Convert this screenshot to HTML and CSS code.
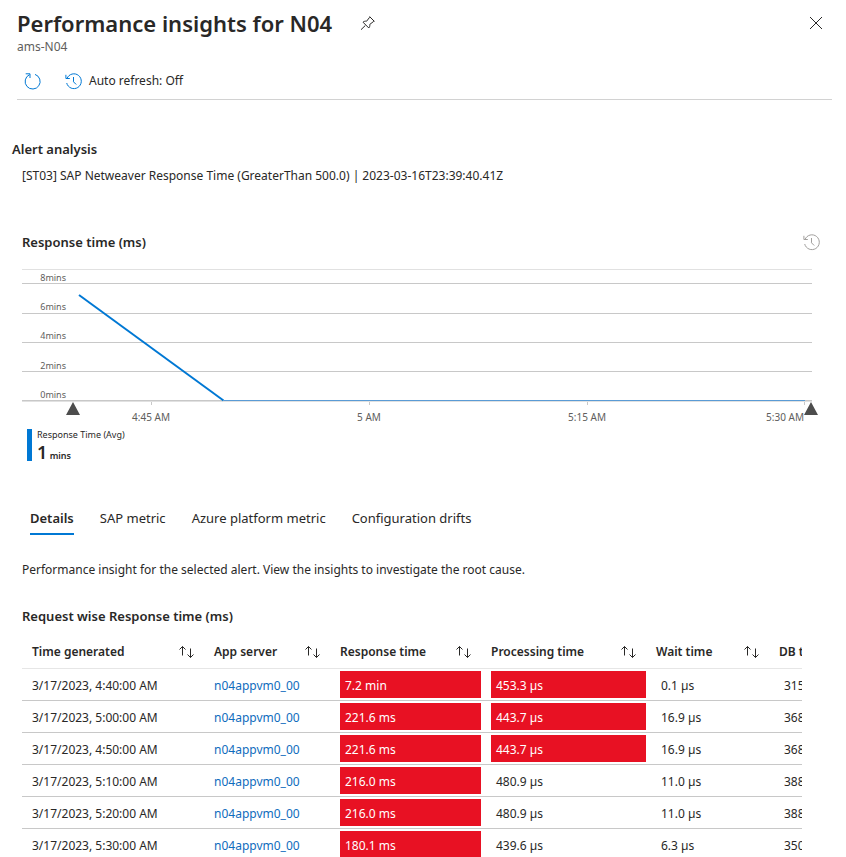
FILE: index.html
```
<!DOCTYPE html>
<html lang="en">
<head>
<meta charset="utf-8">
<meta name="viewport" content="width=device-width, initial-scale=1">
<title>Performance insights for N04</title>
<link rel="stylesheet" href="styles.css">
</head>
<body>
<svg class="sprite" aria-hidden="true">
  <symbol id="history" viewBox="0 0 17 17">
    <path d="M2 5.500A7.400 7.400 0 1 1 1.700 10M.9 1.800V5.500H4.800M8.500 4V8.800L11.200 11.500" fill="none" stroke="currentColor"/>
  </symbol>
  <symbol id="sort" viewBox="0 0 17 14">
    <path d="M4.500 10.500V1.500M1.500 4.500L4.500 1.500L7.500 4.500M12.500 3.500V12.500M9.500 9.500L12.500 12.500L15.500 9.500" fill="none" stroke="currentColor"/>
  </symbol>
</svg>
<div class="blade">
  <header class="header">
    <div class="title-row">
      <h1>Performance insights for N04</h1>
      <button class="icon-button pin" type="button" aria-label="Pin to dashboard">
        <svg width="16" height="16" viewBox="0 0 16 16" fill="none" stroke="currentColor" stroke-linejoin="round"><path d="M1 14.700L5.300 10.500M9.700 1.700L14.300 6.300L13.400 6.600L9.800 9.400C10 11 9.600 12 8.800 13L3 7.200C4 6.300 5.200 6 6.600 6.200L9.400 2.600Z"/></svg>
      </button>
      <button class="icon-button close" type="button" aria-label="Close">
        <svg width="14" height="14" viewBox="0 0 14 14" stroke="currentColor"><path d="M1 1L13 13M13 1L1 13"/></svg>
      </button>
    </div>
    <p class="subtitle">ams-N04</p>
    <div class="toolbar">
      <button class="tool" type="button" aria-label="Refresh">
        <svg width="17" height="17" viewBox="0 0 17 17" fill="none" stroke="currentColor"><path d="M11 1.400A7.500 7.500 0 1 1 5.500 1.700M1.700 .8H6V5"/></svg>
      </button>
      <button class="tool" type="button">
        <svg width="17" height="17"><use href="#history"/></svg>
        <span>Auto refresh: Off</span>
      </button>
    </div>
  </header>
  <main>
    <h2 class="alert-title">Alert analysis</h2>
    <p class="alert">[ST03] SAP Netweaver Response Time (GreaterThan 500.0) | 2023-03-16T23:39:40.41Z</p>

    <section class="chart">
      <div class="chart-head">
        <h2>Response time (ms)</h2>
        <button class="icon-button muted" type="button" aria-label="Time range"><svg width="17" height="17"><use href="#history"/></svg></button>
      </div>
      <svg class="plot" viewBox="0 0 800 156" role="img" aria-label="Response time in minutes from 4:40 AM to 5:30 AM">
        <path class="top" d="M0 .5H790"/>
        <path class="grid" d="M0 14.5H790M0 44.5H790M0 73.5H790M0 102.5H790M0 131.5H790M129.5 132V136M347.5 132V136M565.5 132V136M782.5 132V136"/>
        <path class="base" d="M0 132.5H790"/>
        <path class="flat" d="M202 131.5H783"/>
        <path class="line" d="M57 26L201.500 131.500"/>
        <path class="handle" d="M51 133L58 146H44ZM789 133L796 146H782Z"/>
        <g class="y-labels">
          <text x="44" y="12">8mins</text>
          <text x="44" y="41">6mins</text>
          <text x="44" y="70">4mins</text>
          <text x="44" y="100">2mins</text>
          <text x="44" y="129">0mins</text>
        </g>
        <g class="x-labels">
          <text x="129" y="152">4:45 AM</text>
          <text x="347" y="152">5 AM</text>
          <text x="565" y="152">5:15 AM</text>
          <text x="763" y="152">5:30 AM</text>
        </g>
      </svg>
      <div class="legend">
        <span class="legend-name">Response Time (Avg)</span>
        <span class="legend-value"><strong>1</strong> mins</span>
      </div>
    </section>

    <div class="tabs" role="tablist">
      <button role="tab" type="button" aria-selected="true">Details</button>
      <button role="tab" type="button" aria-selected="false">SAP metric</button>
      <button role="tab" type="button" aria-selected="false">Azure platform metric</button>
      <button role="tab" type="button" aria-selected="false">Configuration drifts</button>
    </div>

    <p class="intro">Performance insight for the selected alert. View the insights to investigate the root cause.</p>

    <h2 class="table-title" id="table-title">Request wise Response time (ms)</h2>
    <div class="table-scroll">
      <table aria-labelledby="table-title">
        <colgroup><col class="c-time"><col class="c-server"><col class="c-response"><col class="c-processing"><col class="c-wait"><col class="c-db"></colgroup>
        <thead>
          <tr>
            <th><button type="button">Time generated <svg width="17" height="14"><use href="#sort"/></svg></button></th>
            <th><button type="button">App server <svg width="17" height="14"><use href="#sort"/></svg></button></th>
            <th><button type="button">Response time <svg width="17" height="14"><use href="#sort"/></svg></button></th>
            <th><button type="button">Processing time <svg width="17" height="14"><use href="#sort"/></svg></button></th>
            <th><button type="button">Wait time <svg width="17" height="14"><use href="#sort"/></svg></button></th>
            <th><button type="button">DB time</button></th>
          </tr>
        </thead>
        <tbody>
          <tr><td>3/17/2023, 4:40:00 AM</td><td><a href="#">n04appvm0_00</a></td><td><span class="cell hot">7.2 min</span></td><td><span class="cell hot">453.3 µs</span></td><td><span class="cell">0.1 µs</span></td><td><span class="cell">315</span></td></tr>
          <tr><td>3/17/2023, 5:00:00 AM</td><td><a href="#">n04appvm0_00</a></td><td><span class="cell hot">221.6 ms</span></td><td><span class="cell hot">443.7 µs</span></td><td><span class="cell">16.9 µs</span></td><td><span class="cell">368</span></td></tr>
          <tr><td>3/17/2023, 4:50:00 AM</td><td><a href="#">n04appvm0_00</a></td><td><span class="cell hot">221.6 ms</span></td><td><span class="cell hot">443.7 µs</span></td><td><span class="cell">16.9 µs</span></td><td><span class="cell">368</span></td></tr>
          <tr><td>3/17/2023, 5:10:00 AM</td><td><a href="#">n04appvm0_00</a></td><td><span class="cell hot">216.0 ms</span></td><td><span class="cell">480.9 µs</span></td><td><span class="cell">11.0 µs</span></td><td><span class="cell">388</span></td></tr>
          <tr><td>3/17/2023, 5:20:00 AM</td><td><a href="#">n04appvm0_00</a></td><td><span class="cell hot">216.0 ms</span></td><td><span class="cell">480.9 µs</span></td><td><span class="cell">11.0 µs</span></td><td><span class="cell">388</span></td></tr>
          <tr><td>3/17/2023, 5:30:00 AM</td><td><a href="#">n04appvm0_00</a></td><td><span class="cell hot">180.1 ms</span></td><td><span class="cell">439.6 µs</span></td><td><span class="cell">6.3 µs</span></td><td><span class="cell">350</span></td></tr>
        </tbody>
      </table>
    </div>
  </main>
</div>
</body>
</html>
```
FILE: styles.css
```
* { box-sizing: border-box; }
body {
  margin: 0;
  color: #292827;
  background: #fff;
  font: 12px/20px "Segoe UI", "Noto Sans", sans-serif;
}
h1, h2, p { margin: 0; }
h2 { font-size: 13px; line-height: 20px; font-weight: 600; }
button {
  padding: 0;
  border: 0;
  background: none;
  color: inherit;
  font: inherit;
  cursor: pointer;
}
svg { display: block; flex: none; }
a { color: #0f6cbd; text-decoration: none; }
.sprite { position: absolute; width: 0; height: 0; }
.blade { height: 100vh; overflow: hidden; }

.header {
  margin: 0 14px 0 17px;
  border-bottom: 1px solid #d2d2d2;
}
.title-row { display: flex; align-items: center; padding-top: 7px; }
h1 { font-size: 22px; line-height: 32px; font-weight: 600; white-space: nowrap; }
.icon-button { display: flex; }
.pin { margin-left: 28px; }
.close { margin: 0 9px 0 auto; }
.subtitle { color: #605e5c; line-height: 16px; }
.toolbar { display: flex; gap: 24px; height: 44px; padding: 8px 0 0 7px; align-items: center; }
.tool { display: flex; align-items: center; gap: 7px; }
.tool svg { color: #0078d4; }

main { padding: 39px 24px 0 22px; }
.alert-title { margin-left: -10px; }
.alert { margin-top: 7px; }

.chart { margin-top: 46px; }
.chart-head { display: flex; justify-content: space-between; align-items: center; }
.muted { color: #a19f9d; margin-right: 2px; }
.plot { width: 100%; height: auto; margin-top: 17px; overflow: visible; fill: none; }
.top { stroke: #e1e1e1; }
.grid { stroke: #c8c8c8; }
.base { stroke: #e1e1e1; }
.flat { stroke: #5a9bd5; }
.line { stroke: #0078d4; stroke-width: 2px; }
.handle { fill: #4d4d4d; }
.plot text { fill: #605e5c; font-size: 10px; }
.plot .y-labels text { font-size: 9px; }
.y-labels { text-anchor: end; }
.x-labels { text-anchor: middle; }
.legend {
  display: flex;
  flex-direction: column;
  height: 32px;
  margin: 4px 0 0 5px;
  padding-left: 5px;
  border-left: 5px solid #0078d4;
}
.legend-name { font-size: 9px; line-height: 12px; }
.legend-value { font-size: 9px; line-height: 22px; font-weight: 600; }
.legend-value strong { font-size: 18px; font-weight: 600; }

.tabs { display: flex; gap: 26px; margin: 45px 0 0 8px; }
.tabs button {
  height: 29px;
  padding-bottom: 3px;
  border-bottom: 2px solid transparent;
  font-size: 13px;
}
.tabs [aria-selected="true"] { border-color: #0078d4; font-weight: 600; }

.intro { margin-top: 25px; }
.table-title { margin-top: 26px; }
.table-scroll { overflow: hidden; margin: 8px 20px 0 0; }
table { width: 900px; table-layout: fixed; border-collapse: separate; border-spacing: 0; }
.c-time { width: 182px; }
.c-server { width: 126px; }
.c-response { width: 151px; }
.c-processing { width: 165px; }
.c-wait { width: 123px; }
th, td { padding: 0 0 0 10px; text-align: left; white-space: nowrap; }
th { height: 35px; padding-top: 2px; padding-right: 9px; border-bottom: 1px solid #e6e6e6; }
th button { display: flex; width: 100%; justify-content: space-between; align-items: center; font-weight: 600; }
td { height: 32px; border-bottom: 1px solid #c8c8c8; }
td:nth-child(-n+2) { padding-top: 2px; }
.cell { display: block; height: 27px; padding-left: 5px; line-height: 29px; }
.hot { background: #e81123; color: #fff; }
```
